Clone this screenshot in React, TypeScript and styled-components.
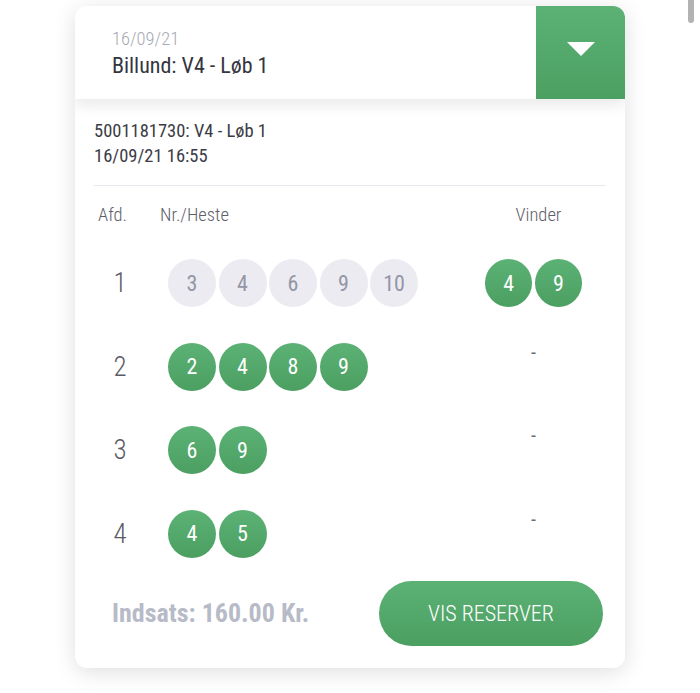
import React from "react";
import styled, { createGlobalStyle } from "styled-components";

const Global = createGlobalStyle`
  html, body { margin: 0; padding: 0; background: #ffffff; }
  body { font-family: "Roboto", "Liberation Sans", sans-serif; font-stretch: condensed; }
`;

const Page = styled.div`
  width: 700px;
  min-height: 693px;
  padding-top: 6px;
  box-sizing: border-box;
`;

const ScrollThumb = styled.div`
  position: fixed;
  top: 0;
  left: 688px;
  width: 6px;
  height: 23px;
  border-radius: 0 0 3px 3px;
  background: #b3b3b3;
`;

const Card = styled.div`
  width: 550px;
  margin: 0 auto;
  background: #fff;
  border-radius: 12px;
  box-shadow: 0 4px 22px rgba(0, 0, 0, 0.13);
  overflow: hidden;
`;

const Header = styled.div`
  position: relative;
  z-index: 1;
  display: flex;
  height: 93px;
  background: #fff;
  box-shadow: 0 6px 14px rgba(0, 0, 0, 0.09);
`;

const HeaderText = styled.div`
  flex: 1;
  display: flex;
  flex-direction: column;
  justify-content: center;
  padding-left: 37px;
  padding-top: 3px;
  gap: 4px;
`;

const HeaderDate = styled.div`
  font-size: 18.5px;
  line-height: 20px;
  font-weight: 300;
  color: #a9aab3;
`;

const HeaderTitle = styled.div`
  font-size: 22px;
  line-height: 26px;
  color: #34353f;
`;

const DropButton = styled.div`
  width: 89px;
  display: flex;
  align-items: center;
  justify-content: center;
  padding-bottom: 7px;
  box-sizing: border-box;
  background: linear-gradient(180deg, #5cb175 0%, #4b9f61 100%);
`;

const Body = styled.div`
  padding: 20px 19px 22px;
`;

const Info = styled.div`
  font-size: 18.5px;
  line-height: 25px;
  color: #3b3c46;
`;

const Divider = styled.div`
  height: 1px;
  margin-top: 16px;
  background: #e7e8ee;
`;

const Grid = styled.div`
  display: grid;
  grid-template-columns: 52px 1fr 97px;
  padding-right: 24px;
  margin-top: 19px;
  row-gap: 35.5px;
  align-items: start;
`;

const HeadCell = styled.div<{ $pad?: number; $center?: boolean }>`
  font-size: 18.5px;
  line-height: 20px;
  font-weight: 300;
  color: #5d5e68;
  padding-left: ${(p) => p.$pad ?? 0}px;
  text-align: ${(p) => (p.$center ? "center" : "left")};
  margin-bottom: -1.5px;
`;

const RaceNo = styled.div`
  height: 48px;
  display: flex;
  align-items: center;
  justify-content: center;
  font-size: 27px;
  font-weight: 300;
  color: #5a5b66;
`;

const Balls = styled.div<{ $pad?: number }>`
  display: flex;
  gap: 2.5px;
  padding-left: ${(p) => p.$pad ?? 0}px;
`;

const Ball = styled.div<{ $win?: boolean }>`
  width: 48px;
  height: 48px;
  border-radius: 50%;
  display: flex;
  align-items: center;
  justify-content: center;
  font-size: 22px;
  font-weight: 400;
  color: ${(p) => (p.$win ? "#ffffff" : "#9396a6")};
  background: ${(p) =>
    p.$win ? "linear-gradient(180deg, #5cb175 0%, #4b9f61 100%)" : "#ebebf1"};
`;

const Dash = styled.div`
  text-align: center;
  font-size: 20px;
  line-height: 18px;
  color: #6a6b75;
`;

const Footer = styled.div`
  display: flex;
  align-items: center;
  justify-content: space-between;
  margin-top: 23px;
  padding-left: 18px;
  padding-right: 3px;
`;

const Stake = styled.div`
  font-size: 26px;
  font-weight: 700;
  color: #b7bac7;
`;

const ReserveButton = styled.button`
  width: 224px;
  height: 65px;
  border: none;
  border-radius: 33px;
  background: linear-gradient(180deg, #5cb175 0%, #4b9f61 100%);
  color: #fff;
  font-family: inherit;
  font-stretch: condensed;
  font-size: 22px;
  font-weight: 300;
  cursor: pointer;
`;

type Race = { no: number; horses: number[]; selected: boolean; winners: number[] };

const races: Race[] = [
  { no: 1, horses: [3, 4, 6, 9, 10], selected: false, winners: [4, 9] },
  { no: 2, horses: [2, 4, 8, 9], selected: true, winners: [] },
  { no: 3, horses: [6, 9], selected: true, winners: [] },
  { no: 4, horses: [4, 5], selected: true, winners: [] },
];

export default function App() {
  return (
    <Page>
      <Global />
      <ScrollThumb />
      <Card>
        <Header>
          <HeaderText>
            <HeaderDate>16/09/21</HeaderDate>
            <HeaderTitle>Billund: V4 - Løb 1</HeaderTitle>
          </HeaderText>
          <DropButton>
            <svg width="28" height="14" viewBox="0 0 28 14">
              <path d="M0 0 H28 L14 14 Z" fill="#ffffff" />
            </svg>
          </DropButton>
        </Header>
        <Body>
          <Info>
            5001181730: V4 - Løb 1
            <br />
            16/09/21 16:55
          </Info>
          <Divider />
          <Grid>
            <HeadCell $pad={4}>Afd.</HeadCell>
            <HeadCell $pad={14}>Nr./Heste</HeadCell>
            <HeadCell $center $pad={10}>Vinder</HeadCell>
            {races.map((r) => (
              <React.Fragment key={r.no}>
                <RaceNo>{r.no}</RaceNo>
                <Balls $pad={22}>
                  {r.horses.map((h) => (
                    <Ball key={h} $win={r.selected}>
                      {h}
                    </Ball>
                  ))}
                </Balls>
                {r.winners.length ? (
                  <Balls>
                    {r.winners.map((w) => (
                      <Ball key={w} $win>
                        {w}
                      </Ball>
                    ))}
                  </Balls>
                ) : (
                  <Dash>-</Dash>
                )}
              </React.Fragment>
            ))}
          </Grid>
          <Footer>
            <Stake>Indsats: 160.00 Kr.</Stake>
            <ReserveButton>VIS RESERVER</ReserveButton>
          </Footer>
        </Body>
      </Card>
    </Page>
  );
}
